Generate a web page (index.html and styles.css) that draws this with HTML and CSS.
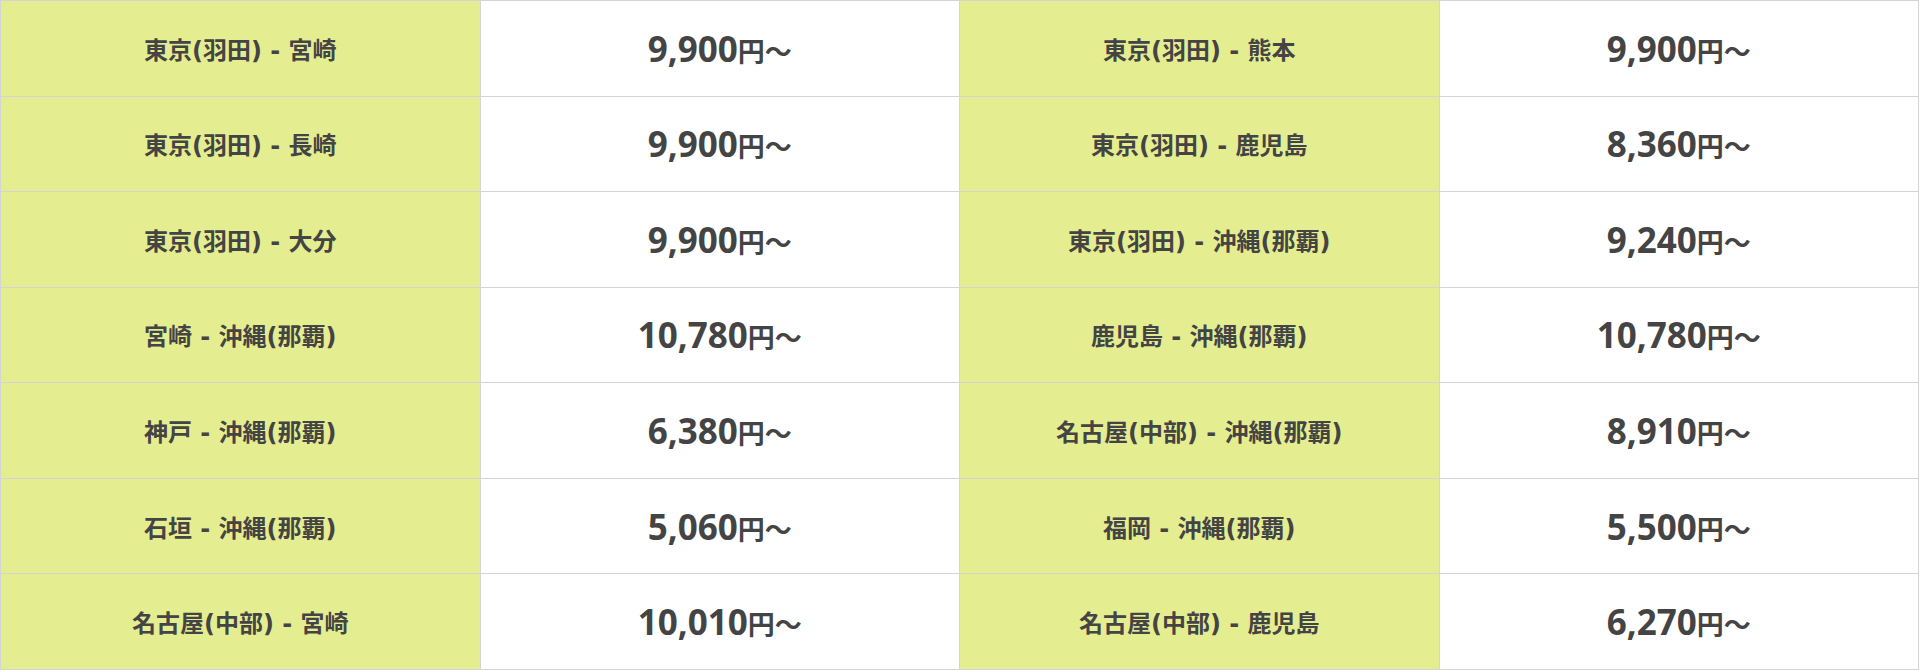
FILE: index.html
```html
<!DOCTYPE html>
<html lang="ja">
<head>
<meta charset="utf-8">
<title>運賃表</title>
<link rel="stylesheet" href="styles.css">
</head>
<body>
<table class="fares">
  <tbody>
    <tr>
      <th class="route">東京(羽田) - 宮崎</th>
      <td class="price"><span class="num">9,900</span><span class="unit">円〜</span></td>
      <th class="route">東京(羽田) - 熊本</th>
      <td class="price"><span class="num">9,900</span><span class="unit">円〜</span></td>
    </tr>
    <tr>
      <th class="route">東京(羽田) - 長崎</th>
      <td class="price"><span class="num">9,900</span><span class="unit">円〜</span></td>
      <th class="route">東京(羽田) - 鹿児島</th>
      <td class="price"><span class="num">8,360</span><span class="unit">円〜</span></td>
    </tr>
    <tr>
      <th class="route">東京(羽田) - 大分</th>
      <td class="price"><span class="num">9,900</span><span class="unit">円〜</span></td>
      <th class="route">東京(羽田) - 沖縄(那覇)</th>
      <td class="price"><span class="num">9,240</span><span class="unit">円〜</span></td>
    </tr>
    <tr>
      <th class="route">宮崎 - 沖縄(那覇)</th>
      <td class="price"><span class="num">10,780</span><span class="unit">円〜</span></td>
      <th class="route">鹿児島 - 沖縄(那覇)</th>
      <td class="price"><span class="num">10,780</span><span class="unit">円〜</span></td>
    </tr>
    <tr>
      <th class="route">神戸 - 沖縄(那覇)</th>
      <td class="price"><span class="num">6,380</span><span class="unit">円〜</span></td>
      <th class="route">名古屋(中部) - 沖縄(那覇)</th>
      <td class="price"><span class="num">8,910</span><span class="unit">円〜</span></td>
    </tr>
    <tr>
      <th class="route">石垣 - 沖縄(那覇)</th>
      <td class="price"><span class="num">5,060</span><span class="unit">円〜</span></td>
      <th class="route">福岡 - 沖縄(那覇)</th>
      <td class="price"><span class="num">5,500</span><span class="unit">円〜</span></td>
    </tr>
    <tr>
      <th class="route">名古屋(中部) - 宮崎</th>
      <td class="price"><span class="num">10,010</span><span class="unit">円〜</span></td>
      <th class="route">名古屋(中部) - 鹿児島</th>
      <td class="price"><span class="num">6,270</span><span class="unit">円〜</span></td>
    </tr>
  </tbody>
</table>
</body>
</html>
```

FILE: styles.css
```css
html, body {
  margin: 0;
  padding: 0;
  background: #ffffff;
}

.fares {
  width: 1919px;
  height: 670px;
  border-collapse: collapse;
  table-layout: fixed;
  color: #444444;
}

.fares th,
.fares td {
  border: 1px solid #d4d4d4;
  text-align: center;
  vertical-align: middle;
  padding: 0;
  width: 25%;
}

.route {
  background: #e5ed91;
  font-family: "DejaVu Sans", "Noto Sans CJK JP", sans-serif;
  font-weight: 700;
  font-size: 24px;
}

.price {
  background: #ffffff;
  font-weight: 700;
}

.num {
  font-family: "Open Sans", "Noto Sans CJK JP", sans-serif;
  font-size: 35px;
}

.unit {
  font-family: "Noto Sans CJK JP", sans-serif;
  font-size: 27px;
}
```
